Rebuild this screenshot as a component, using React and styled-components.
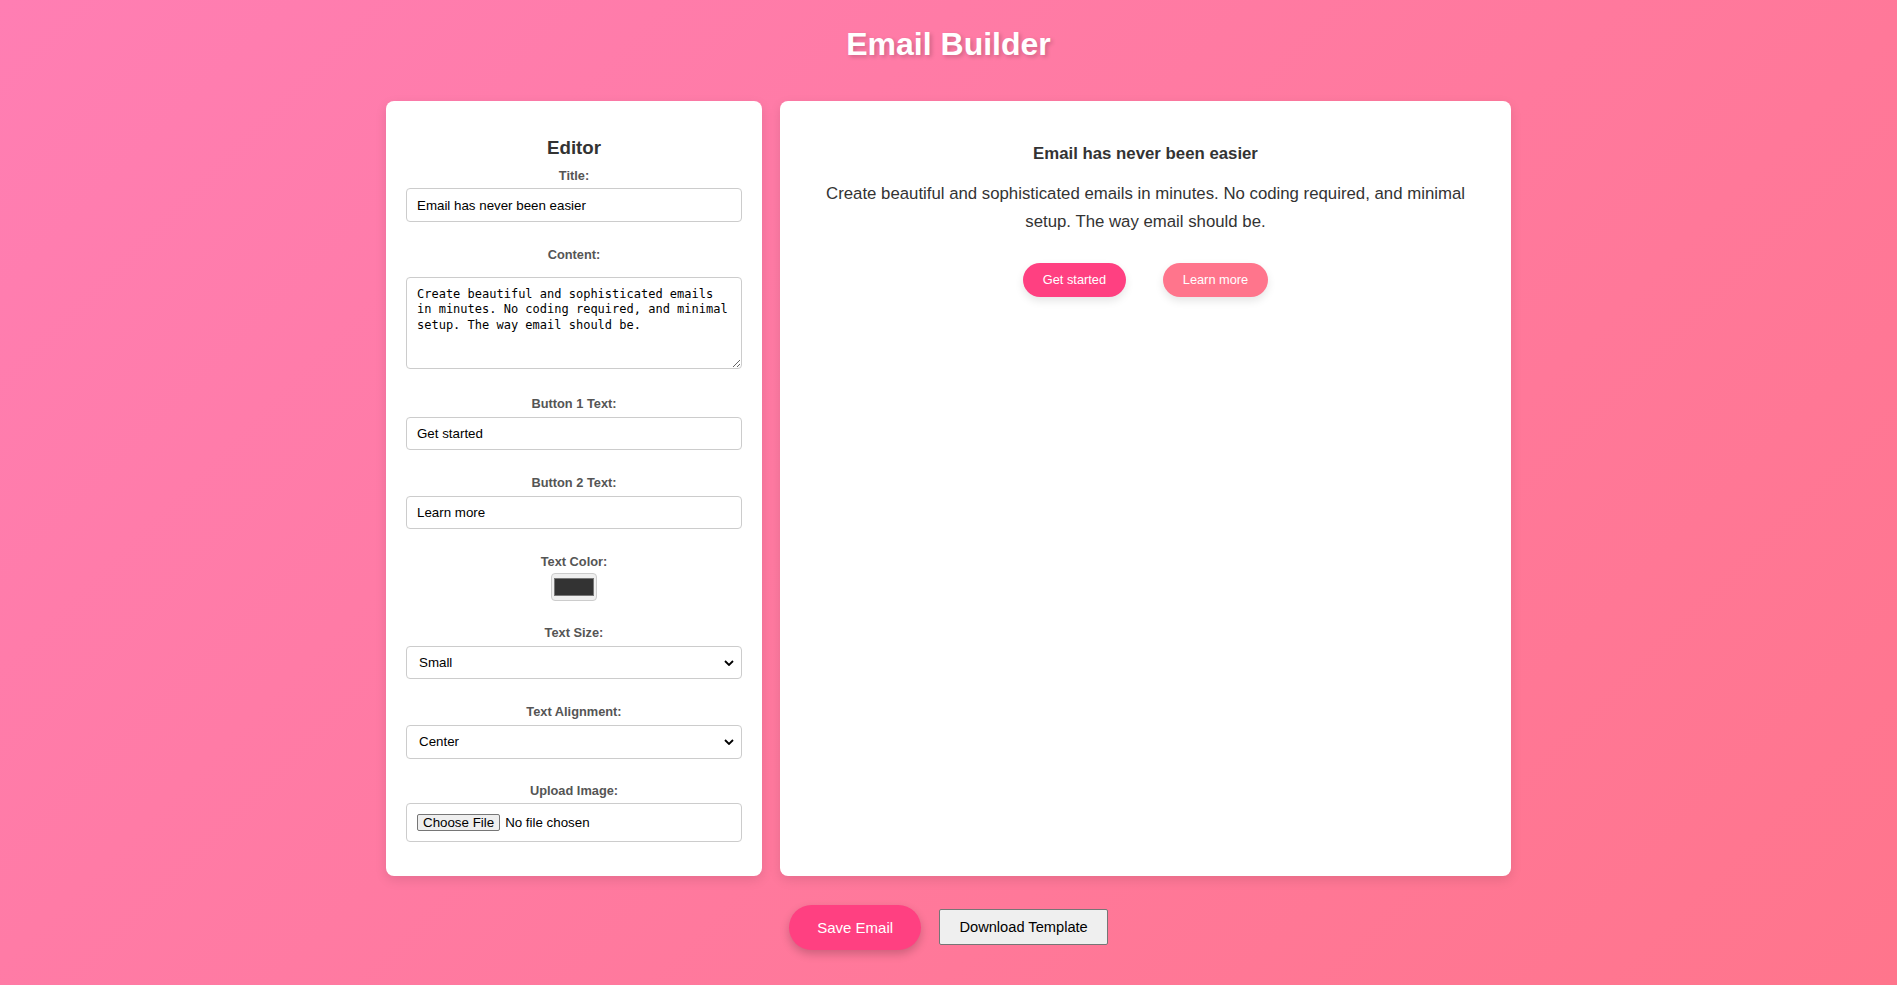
import React, { useState } from "react";
import styled, { createGlobalStyle } from "styled-components";

const GlobalStyle = createGlobalStyle`
  html, body { margin: 0; padding: 0; }
  body { font-family: "Liberation Sans", Arial, sans-serif; }
  * { box-sizing: border-box; }
`;

const Page = styled.div`
  min-height: 100vh;
  padding: 26px 20px 20px;
  background: linear-gradient(135deg, #ff7eb3, #ff758c);
  font-family: "Liberation Sans", Arial, sans-serif;
`;

const PageTitle = styled.h1`
  margin: 0 0 38px;
  text-align: center;
  color: #fff;
  font-size: 32px;
  line-height: 37px;
  font-weight: bold;
  text-shadow: 2px 2px 4px rgba(0, 0, 0, 0.2);
`;

const Workspace = styled.div`
  display: flex;
  justify-content: center;
  align-items: stretch;
  gap: 18px;
`;

const Card = styled.div`
  background: #fff;
  border-radius: 8px;
  box-shadow: 0 4px 12px rgba(0, 0, 0, 0.1);
`;

const EditorCard = styled(Card)`
  width: 376px;
  padding: 20px;
`;

const PreviewCard = styled(Card)`
  width: 731px;
  padding: 30px;
`;

const EditorHeading = styled.h3`
  margin: 16px 0 8.5px;
  font-size: 18.72px;
  line-height: 22px;
  color: #333;
  text-align: center;
  font-weight: bold;
`;

const Group = styled.div`
  display: flex;
  flex-direction: column;
  margin-bottom: 24.8px;
  &:last-child {
    margin-bottom: 13.7px;
  }
`;

const Label = styled.label`
  display: block;
  margin-bottom: 5.8px;
  font-size: 12.8px;
  line-height: 15px;
  font-weight: bold;
  color: #555;
  text-align: center;
`;

const fieldBase = `
  display: block;
  width: 100%;
  border: 1px solid #ccc;
  border-radius: 4px;
  background: #fff;
  color: #000;
  font-family: "Liberation Sans", Arial, sans-serif;
  font-size: 13.33px;
  outline: none;
`;

const TextInput = styled.input`
  ${fieldBase}
  height: 33.6px;
  padding: 0 10px;
`;

const TextArea = styled.textarea`
  ${fieldBase}
  height: 92.6px;
  margin-top: 9.2px;
  margin-bottom: 1.8px;
  padding: 9.5px 10px 10px;
  font-family: "DejaVu Sans Mono", "Liberation Mono", monospace;
  font-size: 12px;
  line-height: 15.3px;
  resize: vertical;
`;

const Swatch = styled.input`
  display: block;
  align-self: center;
  margin: -1.6px 0 -1.2px;
  width: 46px;
  height: 28px;
  padding: 0;
  border: 1px solid #ccc;
  border-radius: 4px;
  background: #efefef;
  -webkit-appearance: none;
  appearance: none;
  cursor: pointer;
  &::-webkit-color-swatch-wrapper {
    padding: 4px 2px;
  }
  &::-webkit-color-swatch {
    border: 1px solid #777;
    border-radius: 0;
  }
`;

const SelectWrap = styled.div`
  position: relative;
`;

const Select = styled.select`
  ${fieldBase}
  height: 33.6px;
  padding: 0 12px;
  -webkit-appearance: none;
  appearance: none;
`;

const Chevron = styled.svg`
  position: absolute;
  right: 8px;
  top: 50%;
  margin-top: -3px;
  pointer-events: none;
`;

const FileInput = styled.input`
  ${fieldBase}
  margin-top: -1.4px;
  padding: 10px;
  &::file-selector-button {
    font-family: "Liberation Sans", Arial, sans-serif;
    font-size: 13.33px;
    padding: 0 5px;
    margin-right: 5px;
    border: 1px solid #767676;
    border-radius: 2px;
    background: #efefef;
    color: #000;
  }
`;

const PreviewTitle = styled.h2`
  margin: 13.3px 0 16.8px;
  font-size: 16.8px;
  line-height: 19.3px;
  font-weight: bold;
  color: ${(p) => p.$color};
  text-align: ${(p) => p.$align};
`;

const PreviewText = styled.p`
  margin: 0;
  font-size: ${(p) => p.$size};
  line-height: 27.6px;
  color: ${(p) => p.$color};
  text-align: ${(p) => p.$align};
`;

const PreviewButtons = styled.div`
  display: flex;
  justify-content: ${(p) => p.$justify};
  gap: 36.7px;
  margin-top: 27.1px;
`;

const PillButton = styled.button`
  border: none;
  border-radius: 25px;
  padding: 10px 20px;
  font-family: "Liberation Sans", Arial, sans-serif;
  font-size: 12.8px;
  line-height: 14.3px;
  color: #fff;
  background: ${(p) => p.$bg};
  box-shadow: 0 4px 8px rgba(0, 0, 0, 0.1);
  cursor: pointer;
`;

const Actions = styled.div`
  display: flex;
  justify-content: center;
  align-items: center;
  gap: 18.3px;
  margin-top: 29.3px;
`;

const SaveButton = styled.button`
  height: 44.7px;
  padding: 0 28px;
  border: none;
  border-radius: 25px;
  background: #ff4081;
  color: #fff;
  font-family: "Liberation Sans", Arial, sans-serif;
  font-size: 15px;
  box-shadow: 0 4px 10px rgba(0, 0, 0, 0.2);
  cursor: pointer;
`;

const DownloadButton = styled.button`
  height: 36px;
  padding: 0 19px;
  border: 1px solid #767676;
  border-radius: 2px;
  background: #efefef;
  color: #000;
  font-family: "Liberation Sans", Arial, sans-serif;
  font-size: 14.65px;
  cursor: pointer;
`;

const sizeMap = { small: "16.8px", medium: "19px", large: "22px" };
const justifyMap = { left: "flex-start", center: "center", right: "flex-end" };

export default function App() {
  const [title, setTitle] = useState("Email has never been easier");
  const [content, setContent] = useState(
    "Create beautiful and sophisticated emails in minutes. No coding required, and minimal setup. The way email should be."
  );
  const [btn1, setBtn1] = useState("Get started");
  const [btn2, setBtn2] = useState("Learn more");
  const [color, setColor] = useState("#333333");
  const [size, setSize] = useState("small");
  const [align, setAlign] = useState("center");

  return (
    <Page>
      <GlobalStyle />
      <PageTitle>Email Builder</PageTitle>
      <Workspace>
        <EditorCard>
          <EditorHeading>Editor</EditorHeading>
          <Group>
            <Label>Title:</Label>
            <TextInput value={title} onChange={(e) => setTitle(e.target.value)} />
          </Group>
          <Group>
            <Label>Content:</Label>
            <TextArea value={content} onChange={(e) => setContent(e.target.value)} />
          </Group>
          <Group>
            <Label>Button 1 Text:</Label>
            <TextInput value={btn1} onChange={(e) => setBtn1(e.target.value)} />
          </Group>
          <Group>
            <Label>Button 2 Text:</Label>
            <TextInput value={btn2} onChange={(e) => setBtn2(e.target.value)} />
          </Group>
          <Group>
            <Label>Text Color:</Label>
            <Swatch type="color" value={color} onChange={(e) => setColor(e.target.value)} />
          </Group>
          <Group>
            <Label>Text Size:</Label>
            <SelectWrap>
              <Select value={size} onChange={(e) => setSize(e.target.value)}>
                <option value="small">Small</option>
                <option value="medium">Medium</option>
                <option value="large">Large</option>
              </Select>
              <Chevron width="10" height="6" viewBox="0 0 10 6">
                <path d="M1 1 L5 5 L9 1" fill="none" stroke="#000" strokeWidth="1.8" />
              </Chevron>
            </SelectWrap>
          </Group>
          <Group>
            <Label>Text Alignment:</Label>
            <SelectWrap>
              <Select value={align} onChange={(e) => setAlign(e.target.value)}>
                <option value="left">Left</option>
                <option value="center">Center</option>
                <option value="right">Right</option>
              </Select>
              <Chevron width="10" height="6" viewBox="0 0 10 6">
                <path d="M1 1 L5 5 L9 1" fill="none" stroke="#000" strokeWidth="1.8" />
              </Chevron>
            </SelectWrap>
          </Group>
          <Group>
            <Label>Upload Image:</Label>
            <FileInput type="file" accept="image/*" />
          </Group>
        </EditorCard>
        <PreviewCard>
          <PreviewTitle $color={color} $align={align}>{title}</PreviewTitle>
          <PreviewText $color={color} $align={align} $size={sizeMap[size]}>
            {content}
          </PreviewText>
          <PreviewButtons $justify={justifyMap[align]}>
            <PillButton $bg="#ff4081">{btn1}</PillButton>
            <PillButton $bg="#ff758c">{btn2}</PillButton>
          </PreviewButtons>
        </PreviewCard>
      </Workspace>
      <Actions>
        <SaveButton>Save Email</SaveButton>
        <DownloadButton>Download Template</DownloadButton>
      </Actions>
    </Page>
  );
}
